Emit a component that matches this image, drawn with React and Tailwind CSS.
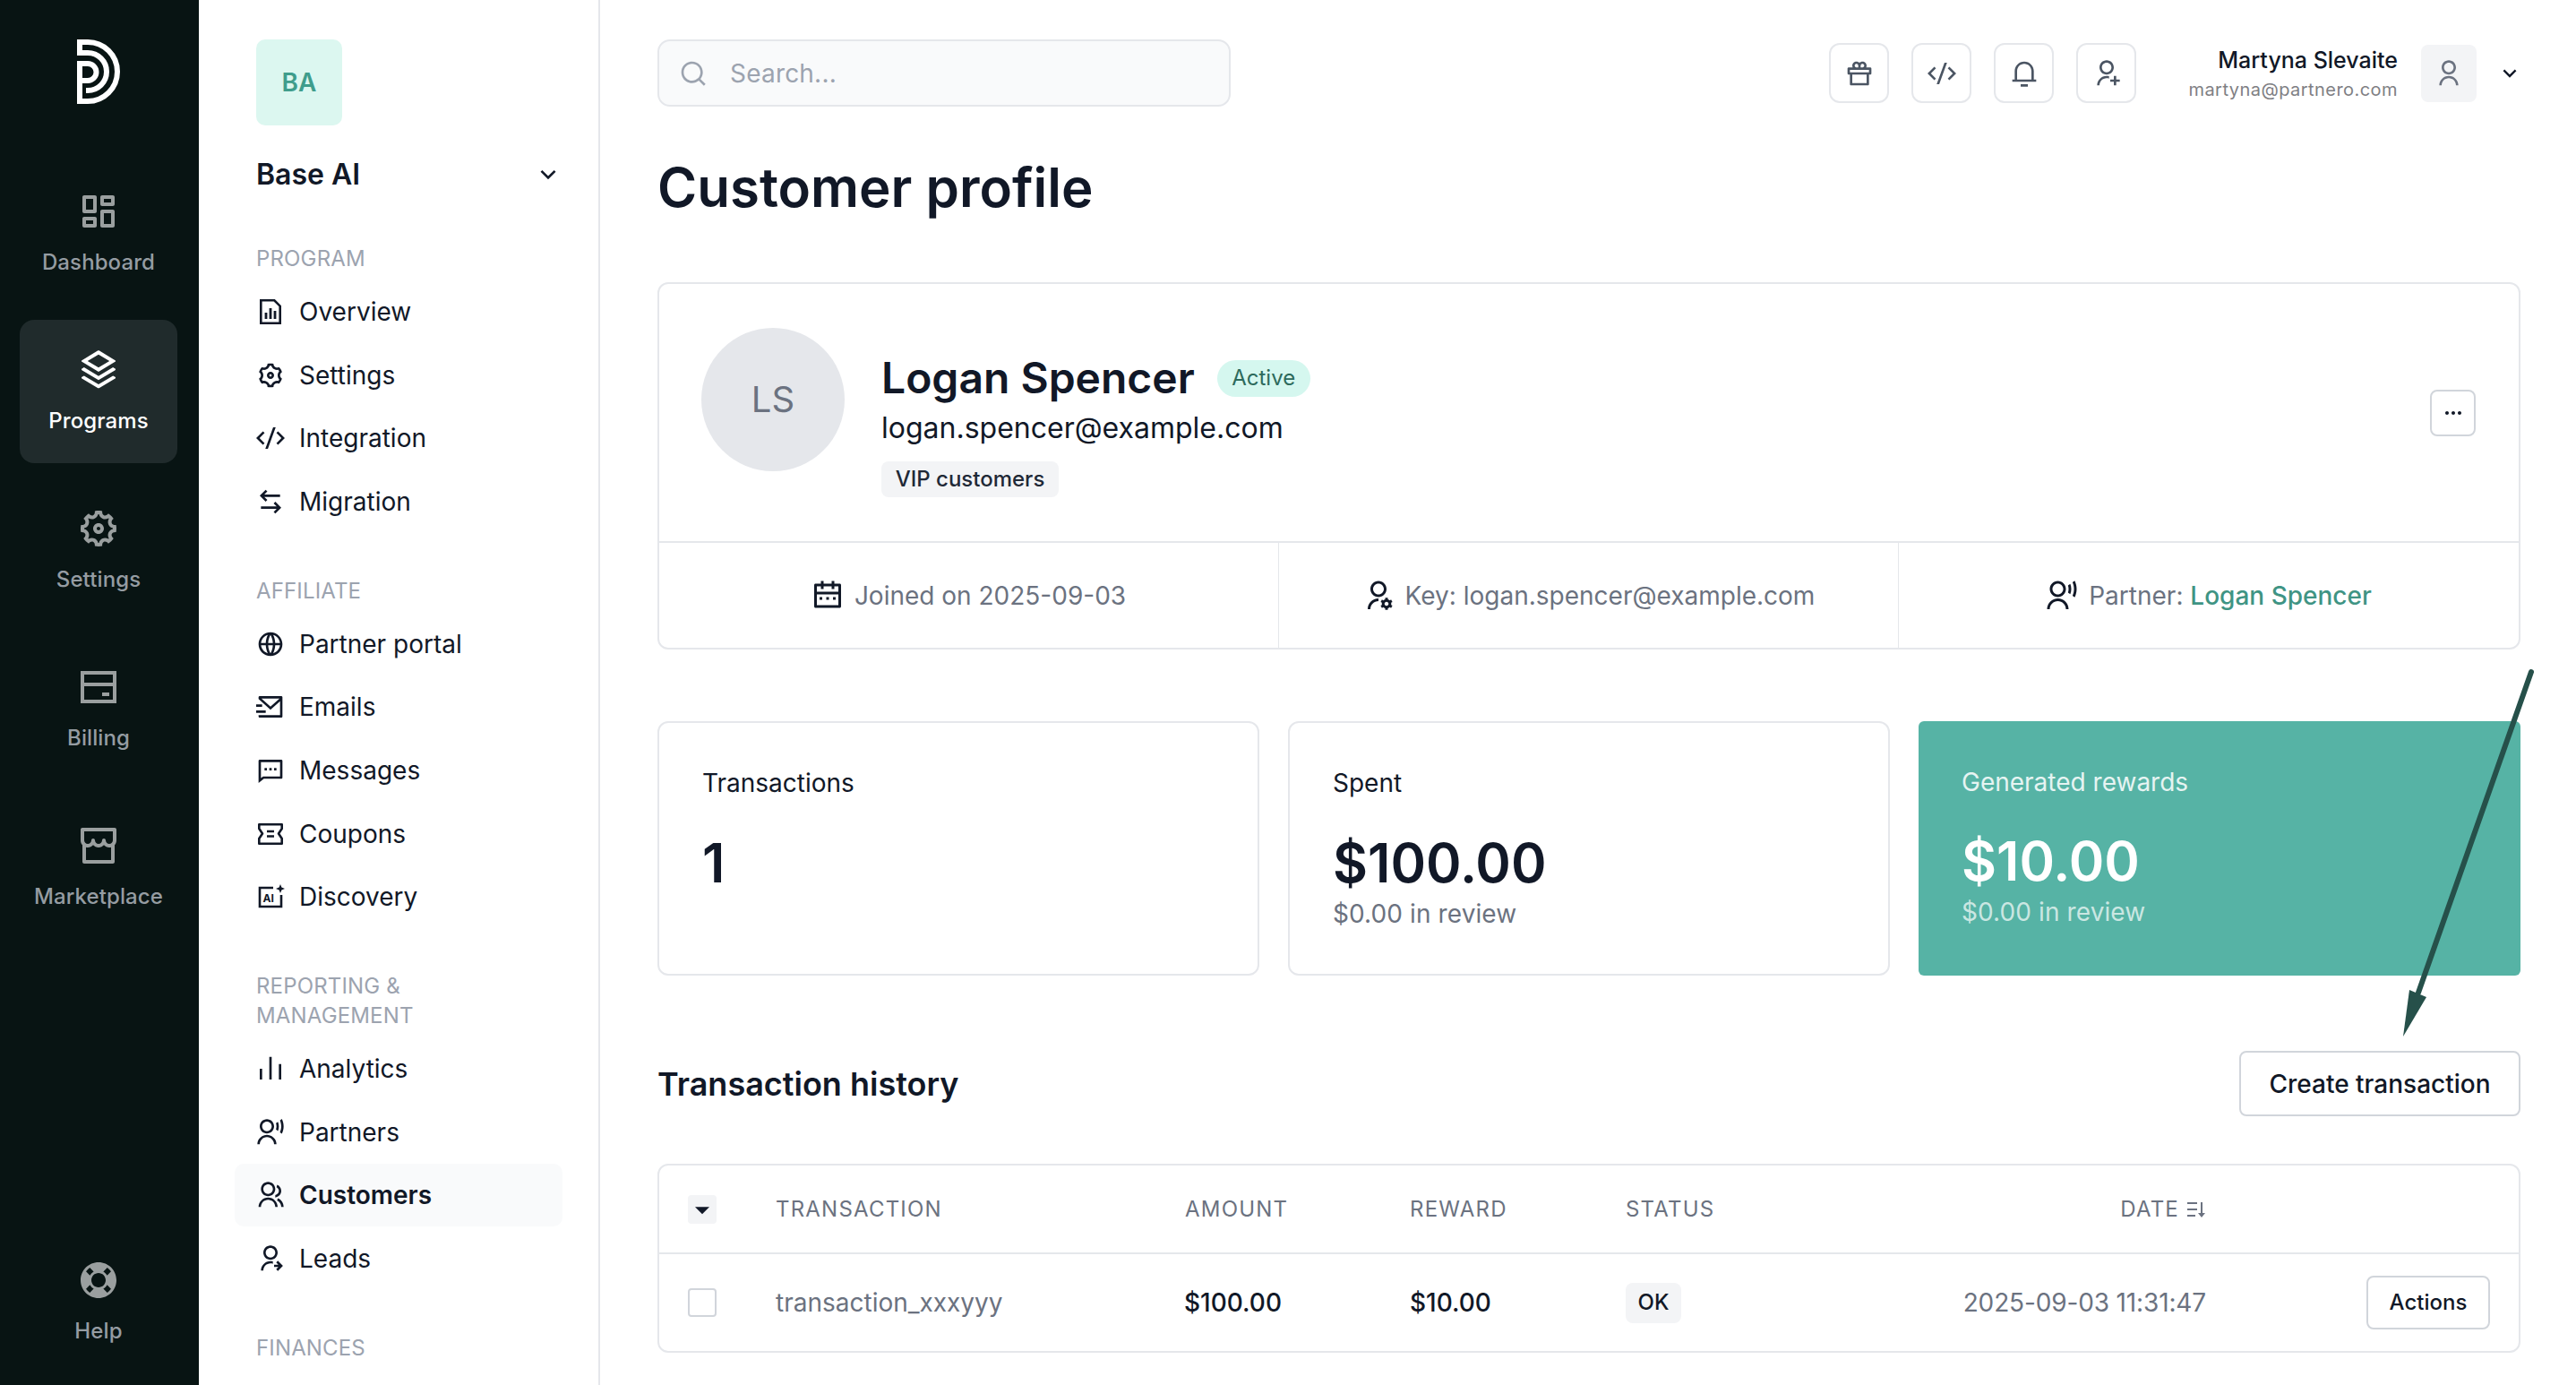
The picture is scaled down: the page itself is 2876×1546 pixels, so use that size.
import {
  RiDashboardLine, RiStackLine, RiSettings5Line, RiStoreLine, RiLifebuoyFill,
  RiSettings3Line, RiCodeSSlashLine, RiArrowLeftRightLine, RiGlobalLine, RiMailSendLine, RiMessage2Line,
  RiBarChartLine, RiUserVoiceLine, RiGroupLine, RiUserSharedLine,
  RiArrowDownSLine, RiSearchLine, RiGift2Line, RiNotification3Line, RiUserAddLine, RiUserLine,
  RiCalendar2Line, RiUserSettingsLine, RiMoreFill, RiSortDesc, RiArrowDownSFill,
} from 'react-icons/ri'

function Logo() {
  return (
    <svg width="48" height="72" viewBox="0 0 48 72" fill="none" stroke="white" strokeWidth="6">
      <path d="M3 46h9a9.5 9.5 0 0 0 0-19H3V69h9a33 33 0 0 0 0-66H3V15h9a21 21 0 0 1 0 42H10" />
    </svg>
  )
}

function BillingIcon({ size, className }) {
  return (
    <svg width={size} height={size} viewBox="0 0 48 48" fill="none" className={className}>
      <path d="M6 8h36v32H6zM6 21h36" stroke="currentColor" strokeWidth="4" />
      <path d="M28 30h8v4h-8z" fill="currentColor" />
    </svg>
  )
}

function OverviewIcon({ size }) {
  return (
    <svg width={size} height={size} viewBox="0 0 32 32" fill="none">
      <path d="M5.3 3.3h15l6.4 6.4v19H5.3z" stroke="#111827" strokeWidth="2.6" />
      <path d="M11 17v7M16 12v12M21 15v9" stroke="#111827" strokeWidth="2.8" />
    </svg>
  )
}

function CouponIcon({ size }) {
  return (
    <svg width={size} height={size} viewBox="0 0 32 32" fill="none" stroke="#111827" strokeWidth="2.6">
      <path d="M3.3 5.3h25.4V10L25 15.5l3.7 5.5v5.7H3.3V21L7 15.5 3.3 10z" strokeLinejoin="round" />
      <path d="M12 13h8M12 18.5h8" />
    </svg>
  )
}

function DiscoveryIcon() {
  return (
    <svg width="32" height="32" viewBox="0 0 32 32" fill="none">
      <path d="M19 6H4v21h24V14" stroke="#111827" strokeWidth="2.6" />
      <path d="M27 2l1.4 3.6L32 7l-3.6 1.4L27 12l-1.4-3.6L22 7l3.6-1.4z" fill="#111827" />
      <text x="7.5" y="22" fontSize="12" fontWeight="700" fill="#111827" fontFamily="Inter, sans-serif">AI</text>
    </svg>
  )
}

const rail = [
  { label: 'Dashboard', icon: RiDashboardLine },
  { label: 'Programs', icon: RiStackLine, active: true },
  { label: 'Settings', icon: RiSettings5Line },
  { label: 'Billing', icon: BillingIcon },
  { label: 'Marketplace', icon: RiStoreLine },
]

const sections = [
  { title: 'PROGRAM', items: [['Overview', OverviewIcon], ['Settings', RiSettings3Line], ['Integration', RiCodeSSlashLine], ['Migration', RiArrowLeftRightLine]] },
  { title: 'AFFILIATE', items: [['Partner portal', RiGlobalLine], ['Emails', RiMailSendLine], ['Messages', RiMessage2Line], ['Coupons', CouponIcon], ['Discovery', DiscoveryIcon]] },
  { title: 'REPORTING & MANAGEMENT', items: [['Analytics', RiBarChartLine], ['Partners', RiUserVoiceLine], ['Customers', RiGroupLine], ['Leads', RiUserSharedLine]] },
  { title: 'FINANCES', items: [] },
]

function RailItem({ item }) {
  const Icon = item.icon
  return (
    <div className={`flex h-[160px] w-[176px] flex-col items-center rounded-[16px] pt-[32px] ${item.active ? 'bg-[#202b2c] text-white' : 'text-[#959ca2]'}`}>
      <Icon size={48} className={item.active ? 'text-white' : 'text-[#9a9f9f]'} />
      <span className="mt-[15px] text-[24px] leading-[36px] font-medium tracking-[0.1px]">{item.label}</span>
    </div>
  )
}

function TopButton({ icon: Icon }) {
  return (
    <button className="flex h-[67px] w-[67px] items-center justify-center rounded-[12px] border-2 border-[#e5e7eb] text-[#4b5563]">
      <Icon size={32} />
    </button>
  )
}

function Stat({ label, value, sub }) {
  return (
    <div className="h-[284px] rounded-[12px] border-2 border-[#e5e7eb] px-[48px] pt-[47px]">
      <div className="text-[28px] leading-[40px] text-[#111827]">{label}</div>
      <div className="mt-[34px] text-[60px] leading-[70px] font-semibold text-[#111827]">{value}</div>
      {sub && <div className="mt-[2px] text-[28px] leading-[40px] tracking-[0.1px] text-[#6b7280]">{sub}</div>}
    </div>
  )
}

const tableCols = 'grid-cols-[98px_456px_252px_241px_200px_448px_1fr]'

export default function App() {
  return (
    <div className="relative flex h-[1546px] w-[2876px] overflow-hidden bg-white font-[Inter,sans-serif] text-[#111827]">
      <aside className="flex w-[222px] shrink-0 flex-col items-center bg-[#081413] pr-[2px] pb-[13px]">
        <div className="mt-[44px] h-[72px]"><Logo /></div>
        <div className="mt-[64px] flex flex-col gap-[17px]">
          {rail.map((item) => <RailItem key={item.label} item={item} />)}
        </div>
        <div className="mt-auto"><RailItem item={{ label: 'Help', icon: RiLifebuoyFill }} /></div>
      </aside>

      <aside className="w-[448px] shrink-0 overflow-hidden border-r-2 border-[#e5e7eb] pt-[44px] pl-[40px]">
        <div className="ml-[24px] flex h-[96px] w-[96px] items-center justify-center rounded-[10px] bg-[#dcf7f0] text-[28px] font-semibold text-[#3f9d8c]">BA</div>
        <div className="mt-[35px] flex h-[40px] w-[366px] items-center justify-between pl-[24px]">
          <span className="text-[32px] leading-[40px] font-semibold">Base AI</span>
          <RiArrowDownSLine size={32} />
        </div>
        <div className="mt-[57px] flex flex-col gap-[48px]">
          {sections.map((s) => (
            <div key={s.title}>
              <div className="w-[300px] pl-[24px] text-[24px] leading-[33px] tracking-[0.15px] text-[#9ca3af]">{s.title}</div>
              {s.items.length > 0 && (
                <div className="mt-[8px] flex w-[366px] flex-col gap-[0.6px]">
                  {s.items.map(([label, Icon]) => {
                    const active = label === 'Customers'
                    return (
                      <div key={label} className={`flex h-[70px] items-center gap-[16px] rounded-[10px] px-[24px] text-[28px] ${active ? 'bg-[#f9fafb] font-semibold' : ''}`}>
                        <Icon size={32} />
                        <span>{label}</span>
                      </div>
                    )
                  })}
                </div>
              )}
            </div>
          ))}
        </div>
      </aside>

      <main className="min-w-0 flex-1 pt-[44px] pr-[62px] pl-[64px]">
        <div className="flex items-start justify-between">
          <div className="flex h-[75px] w-[640px] items-center gap-[25px] rounded-[14px] border-2 border-[#e5e7eb] bg-[#f9fafb] px-[22px] text-[28px] tracking-[0.2px] text-[#9ca3af]">
            <RiSearchLine size={32} />
            <span>Search...</span>
          </div>
          <div className="mt-[4px] flex items-center">
            <div className="flex gap-[25px]">
              <TopButton icon={RiGift2Line} />
              <TopButton icon={RiCodeSSlashLine} />
              <TopButton icon={RiNotification3Line} />
              <TopButton icon={RiUserAddLine} />
            </div>
            <div className="ml-[58px] flex flex-col items-end">
              <span className="text-[25px] leading-[36px] font-medium">Martyna Slevaite</span>
              <span className="text-[20px] leading-[30px] tracking-[0.45px] text-[#7f8084]">martyna@partnero.com</span>
            </div>
            <div className="ml-[26px] flex h-[64px] w-[62px] items-center justify-center rounded-[8px] bg-[#f3f4f6] text-[#6b7280]">
              <RiUserLine size={32} />
            </div>
            <RiArrowDownSLine size={28} className="mr-[-2px] ml-[23px]" />
          </div>
        </div>

        <h1 className="mt-[54px] text-[60px] leading-[72px] font-semibold">Customer profile</h1>

        <section className="mt-[70px] rounded-[12px] border-2 border-[#e5e7eb]">
          <div className="flex h-[289px] items-center border-b-2 border-[#e5e7eb] pr-[48px] pl-[47px]">
            <div className="flex h-[160px] w-[160px] shrink-0 -translate-y-[15px] items-center justify-center rounded-full bg-[#e5e7eb] text-[40px] text-[#6b7280]">LS</div>
            <div className="ml-[41px] translate-y-[13px]">
              <div className="flex items-center gap-[25px]">
                <span className="text-[48px] leading-[60px] font-semibold">Logan Spencer</span>
                <span className="flex h-[41px] w-[104px] items-center justify-center rounded-full bg-[#d5f7ef] text-[24px] text-[#2d6a5c]">Active</span>
              </div>
              <div className="mt-[4px] text-[32px] leading-[44px]">logan.spencer@example.com</div>
              <div className="mt-[15px] inline-flex h-[40px] w-[198px] items-center justify-center rounded-[8px] bg-[#f3f4f6] text-[24px] font-medium text-[#1f2937]">VIP customers</div>
            </div>
            <button className="ml-auto flex h-[52px] w-[51px] items-center justify-center rounded-[8px] border-2 border-[#d1d5db]">
              <RiMoreFill size={24} />
            </button>
          </div>
          <div className="grid h-[117px] grid-cols-[691px_693px_1fr] text-[28px] text-[#6b7280]">
            <div className="flex items-center justify-center gap-[12px]">
              <RiCalendar2Line size={36} className="text-[#111827]" />
              <span>Joined on 2025-09-03</span>
            </div>
            <div className="flex items-center justify-center gap-[12px] border-x border-[#e5e7eb]">
              <RiUserSettingsLine size={36} className="text-[#111827]" />
              <span>Key: logan.spencer@example.com</span>
            </div>
            <div className="flex items-center justify-center gap-[12px]">
              <RiUserVoiceLine size={36} className="text-[#111827]" />
              <span>Partner: <span className="font-medium text-[#3f9484]">Logan Spencer</span></span>
            </div>
          </div>
        </section>

        <div className="mt-[80px] grid grid-cols-3 gap-[32px]">
          <Stat label="Transactions" value="1" />
          <Stat label="Spent" value="$100.00" sub="$0.00 in review" />
          <div className="h-[284px] rounded-[6px] bg-[#56b3a5] px-[48px] pt-[48px] text-white">
            <div className="text-[28px] leading-[40px] text-white/85">Generated rewards</div>
            <div className="mt-[33px] text-[60px] leading-[70px] font-semibold">$10.00</div>
            <div className="mt-[2px] text-[28px] leading-[40px] tracking-[0.1px] text-white/70">$0.00 in review</div>
          </div>
        </div>

        <div className="mt-[84px] flex items-center justify-between">
          <h2 className="text-[36px] leading-[48px] font-semibold">Transaction history</h2>
          <button className="h-[73px] w-[314px] rounded-[8px] border-2 border-[#d1d5db] text-[28px] font-medium">Create transaction</button>
        </div>

        <section className="mt-[53px] rounded-[12px] border-2 border-[#e5e7eb]">
          <div className={`grid h-[99px] ${tableCols} items-center border-b-2 border-[#e5e7eb] pl-[32px] text-[24px] tracking-[1.2px] text-[#6b7280]`}>
            <div className="flex h-[32px] w-[32px] items-center justify-center rounded-[4px] bg-[#f3f4f6] text-[#111827]"><RiArrowDownSFill size={32} /></div>
            <div>TRANSACTION</div>
            <div className="pl-[1px]">AMOUNT</div>
            <div>REWARD</div>
            <div>STATUS</div>
            <div className="flex items-center justify-end gap-[6px]">DATE <RiSortDesc size={24} /></div>
            <div />
          </div>
          <div className={`grid h-[108px] ${tableCols} items-center pl-[32px] text-[28px]`}>
            <div className="h-[32px] w-[32px] rounded-[4px] border-2 border-[#d1d5db]" />
            <div className="text-[#6b7280]">transaction_xxxyyy</div>
            <div className="font-medium">$100.00</div>
            <div className="font-medium">$10.00</div>
            <div><span className="flex h-[45px] w-[62px] items-center justify-center rounded-[8px] bg-[#f3f4f6] text-[24px] font-medium">OK</span></div>
            <div className="text-right tracking-[-0.14px] text-[#6b7280]">2025-09-03 11:31:47</div>
            <div className="flex justify-end pr-[32px]">
              <button className="h-[60px] w-[138px] rounded-[8px] border-2 border-[#d1d5db] text-[24px] font-medium">Actions</button>
            </div>
          </div>
        </section>
      </main>

      <svg className="pointer-events-none absolute top-[740px] left-[2670px]" width="170" height="430" viewBox="0 0 170 430" fill="none">
        <path d="M156 10L30 368" stroke="#26504a" strokeWidth="6" strokeLinecap="round" />
        <path d="M13 417L20 365L39 373z" fill="#26504a" />
      </svg>
    </div>
  )
}
